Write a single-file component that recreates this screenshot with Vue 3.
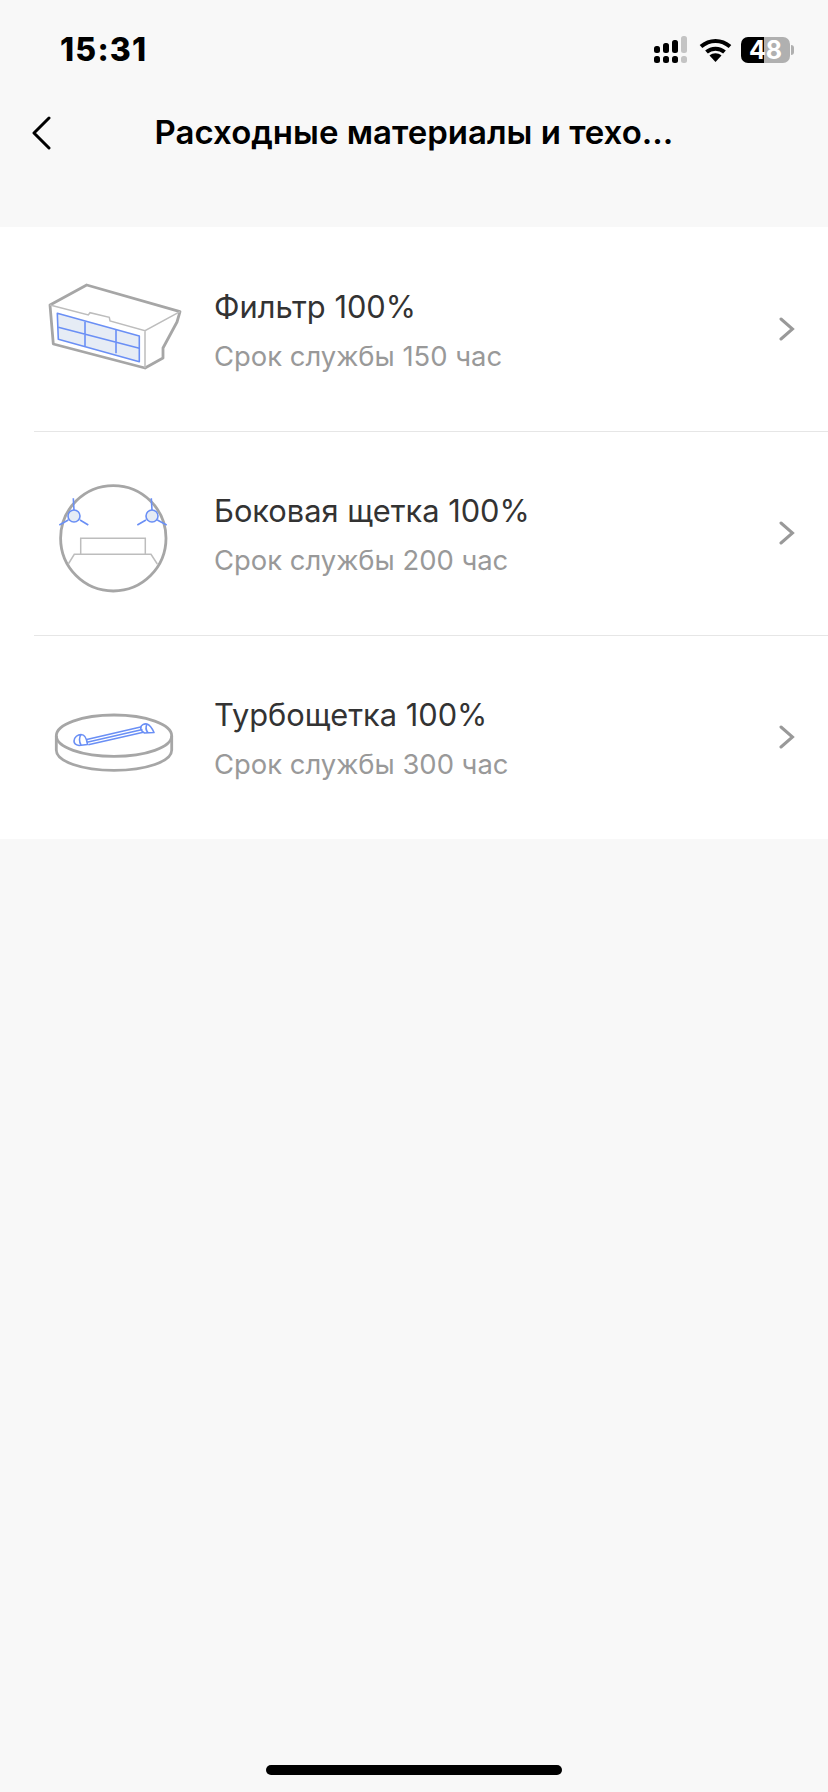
<script setup>
const parts = [
  { kind: 'filter', title: 'Фильтр 100%', life: 'Срок службы 150 час' },
  { kind: 'side', title: 'Боковая щетка 100%', life: 'Срок службы 200 час' },
  { kind: 'turbo', title: 'Турбощетка 100%', life: 'Срок службы 300 час' },
]
</script>

<template>
  <div class="page">
    <header class="status">
      <span class="clock">15:31</span>
      <div class="indicators">
        <svg class="signal" width="34" height="27" viewBox="0 0 34 27">
          <rect x="0" y="10" width="6" height="7" rx="2.5" />
          <rect x="9" y="7" width="6" height="10" rx="2.5" />
          <rect x="18" y="4" width="6" height="13" rx="2.5" />
          <rect class="off" x="27" y="0" width="6" height="17" rx="2.5" />
          <rect x="0" y="20" width="6" height="7" rx="2.5" />
          <rect x="9" y="20" width="6" height="7" rx="2.5" />
          <rect x="18" y="20" width="6" height="7" rx="2.5" />
          <rect class="off" x="27" y="20" width="6" height="7" rx="2.5" />
        </svg>
        <svg class="wifi" width="33" height="25" viewBox="0 0 33 25">
          <path d="M16.500 25L10.500 18.500C14 15.500 19 15.500 22.500 18.500Z" />
          <path d="M2 9.500C10.500 2 22.500 2 31 9.500M7.500 15C12.500 10.500 20.500 10.500 25.500 15" fill="none" stroke="#000" stroke-width="4" />
        </svg>
        <div class="battery">
          <span class="level">48</span>
          <span class="tip"></span>
        </div>
      </div>
    </header>

    <nav class="nav">
      <svg class="back" width="20" height="34" viewBox="0 0 20 34">
        <path d="M18 2L3 17L18 32" />
      </svg>
      <h1 class="heading">Расходные материалы и техо...</h1>
    </nav>

    <ul class="list">
      <li v-for="part in parts" :key="part.kind" class="row">
        <svg v-if="part.kind === 'filter'" class="pic" width="170" height="130" viewBox="0 4 170 130">
          <path class="thick" d="M20 45L56.700 25L150 51.700L147 62L133 88V98L115 108L23.300 84Z" />
          <path class="thin" d="M20 45L58.300 55L60 52.700L79.300 57.300L80 61L115 70.700L150 51.700M115 70.700V108" />
          <path class="blue tint" d="M27.300 53.300L109.300 76V101.700L28.300 79.300Z" />
          <path class="blue" d="M55 61.700V86M86 69.300V93.300M28.300 67.300L109.300 88.300" />
        </svg>

        <svg v-else-if="part.kind === 'side'" class="pic" width="170" height="130" viewBox="-10 -2 170 130">
          <circle class="thick" cx="73.300" cy="68.300" r="52.700" />
          <path class="thin" d="M40.700 84V68.300H105.300V84M28.300 94L34.300 84.300H111L117.300 94" />
          <circle class="blue tint" cx="34" cy="46" r="6" />
          <circle class="blue tint" cx="112" cy="46" r="6" />
          <path class="blue" d="M34 40L33.300 28.300M28.300 50L19.300 55M40 50L48.300 55M112 40L111.300 28.300M106 50L97.300 55M117.300 50L126.700 55" />
        </svg>

        <svg v-else class="pic" width="170" height="130" viewBox="-10 -18 170 130">
          <ellipse class="thick" cx="74" cy="45.700" rx="57.700" ry="20.700" />
          <path class="thick" d="M16.300 45.700V60C16.300 71.500 42 80.300 74 80.300C106 80.300 131.700 71.500 131.700 60V45.700" />
          <path class="blue" d="M46.700 49.500L101.700 36.800M48.300 54.800L103.300 42.200M47 52.300L102.500 39.500" />
          <path class="blue" d="M34 51C34 47 38 44.500 41 44.500C45 44.500 46.700 48 47.500 54.500L39 55.500C36 55 34 53.500 34 51ZM41 44.500C39 47 39 52 41 55" />
          <path class="blue" d="M100.700 37.500C101 35 104 33.500 107 34C110 35 112 38 114 42.500L104.500 43C102.500 42 100.700 40 100.700 37.500ZM107 34C105.500 37 106 40.500 108 42.800" />
        </svg>

        <div class="copy">
          <div class="name">{{ part.title }}</div>
          <div class="life">{{ part.life }}</div>
        </div>

        <svg class="more" width="16" height="24" viewBox="0 0 16 24">
          <path d="M2 2L13.500 12L2 22" />
        </svg>
      </li>
    </ul>

    <div class="home-bar"></div>
  </div>
</template>

<style>
html,
body {
  margin: 0;
  background: #f8f8f8;
}
</style>

<style scoped>
.page {
  width: 828px;
  height: 1792px;
  display: flex;
  flex-direction: column;
  background: #f8f8f8;
  font-family: Inter, "Liberation Sans", sans-serif;
  overflow: hidden;
}

.status {
  height: 100px;
  box-sizing: border-box;
  padding: 32px 38px 0 60px;
  display: flex;
  justify-content: space-between;
  align-items: flex-start;
}

.clock {
  font-size: 32px;
  line-height: 36px;
  font-weight: 800;
  letter-spacing: 1.2px;
  color: #000;
}

.indicators {
  display: flex;
  align-items: center;
  padding-top: 4px;
}

.signal {
  fill: #000;
  margin-right: 11px;
}

.signal .off {
  fill: #c4c4c4;
}

.wifi {
  margin-right: 9px;
}

.battery {
  position: relative;
  width: 49px;
  height: 26px;
  border-radius: 7px;
  background: linear-gradient(90deg, #000 0 47%, #b0b0b0 47% 100%);
  text-align: center;
}

.level {
  font-size: 25px;
  line-height: 26px;
  font-weight: 700;
  color: #fff;
  display: block;
}

.tip {
  position: absolute;
  left: 50px;
  top: 8px;
  width: 3px;
  height: 10px;
  border-radius: 0 3px 3px 0;
  background: #b0b0b0;
}

.nav {
  position: relative;
  height: 66px;
  display: flex;
  align-items: center;
  justify-content: center;
}

.back {
  position: absolute;
  left: 31px;
  top: 16px;
  fill: none;
  stroke: #000;
  stroke-width: 3;
  stroke-linecap: round;
  stroke-linejoin: round;
}

.heading {
  margin: 0 0 2px;
  font-size: 33px;
  line-height: 40px;
  font-weight: 600;
  color: #000;
}

.list {
  list-style: none;
  margin: 61px 0 0;
  padding: 0;
  background: #fff;
}

.row {
  position: relative;
  height: 204px;
  box-sizing: border-box;
  padding: 0 33px 0 30px;
  display: flex;
  align-items: center;
}

.row + .row::before {
  content: "";
  position: absolute;
  left: 34px;
  right: 0;
  top: 0;
  height: 1px;
  background: #e6e6e6;
}

.pic {
  flex: none;
  margin-right: 14px;
  fill: none;
}

.thick {
  stroke: #a6a6a6;
  stroke-width: 2.800;
  fill: none;
  stroke-linejoin: round;
}

.thin {
  stroke: #bdbdbd;
  stroke-width: 1.500;
  fill: none;
}

.blue {
  stroke: #6a8ff5;
  stroke-width: 1.600;
  fill: none;
  stroke-linejoin: round;
}

.tint {
  fill: #e6ecf5;
}

.copy {
  flex: 1;
  padding-top: 3px;
}

.name {
  font-size: 30.800px;
  line-height: 36px;
  color: #333;
}

.life {
  margin-top: 15px;
  font-size: 27.400px;
  line-height: 32px;
  color: #999;
}

.more {
  flex: none;
  fill: none;
  stroke: #999;
  stroke-width: 3;
  stroke-linecap: round;
  stroke-linejoin: miter;
}

.home-bar {
  width: 296px;
  height: 10px;
  border-radius: 5px;
  background: #000;
  margin: auto auto 17px;
}
</style>
